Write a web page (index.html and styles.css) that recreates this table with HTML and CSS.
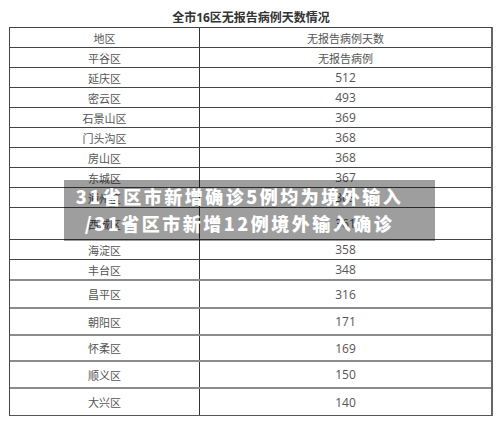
FILE: index.html
```html
<!DOCTYPE html>
<html lang="zh-CN">
<head>
<meta charset="utf-8">
<title>全市16区无报告病例天数情况</title>
<link rel="stylesheet" href="styles.css">
</head>
<body>
<div class="page">
  <div class="title">全市16区无报告病例天数情况</div>
  <div class="table">
    <div class="row head"><div class="c1">地区</div><div class="c2">无报告病例天数</div></div>
    <div class="row"><div class="c1">平谷区</div><div class="c2">无报告病例</div></div>
    <div class="row"><div class="c1">延庆区</div><div class="c2 num">512</div></div>
    <div class="row"><div class="c1">密云区</div><div class="c2 num">493</div></div>
    <div class="row"><div class="c1">石景山区</div><div class="c2 num">369</div></div>
    <div class="row"><div class="c1">门头沟区</div><div class="c2 num">368</div></div>
    <div class="row"><div class="c1">房山区</div><div class="c2 num">368</div></div>
    <div class="row"><div class="c1">东城区</div><div class="c2 num">367</div></div>
    <div class="row"><div class="c1">通州区</div><div class="c2 num">363</div></div>
    <div class="row tall"><div class="c1">西城区</div><div class="c2 num">361</div></div>
    <div class="row"><div class="c1">海淀区</div><div class="c2 num">358</div></div>
    <div class="row"><div class="c1">丰台区</div><div class="c2 num">348</div></div>
    <div class="row big h28"><div class="c1">昌平区</div><div class="c2 num">316</div></div>
    <div class="row big h27"><div class="c1">朝阳区</div><div class="c2 num">171</div></div>
    <div class="row big h26"><div class="c1">怀柔区</div><div class="c2 num">169</div></div>
    <div class="row big h27"><div class="c1">顺义区</div><div class="c2 num">150</div></div>
    <div class="row big h28"><div class="c1">大兴区</div><div class="c2 num">140</div></div>
  </div>
  <div class="overlay"><span class="line">31省区市新增确诊5例均为境外输入</span><span class="line">/31省区市新增12例境外输入确诊</span></div>
</div>
</body>
</html>
```

FILE: styles.css
```css
html, body {
  margin: 0;
  padding: 0;
  background: #fff;
}
.page {
  position: relative;
  width: 500px;
  height: 424px;
  font-family: "Open Sans", "Noto Sans CJK SC", sans-serif;
  color: #555;
}
.title {
  margin-left: 9px;
  width: 484px;
  height: 27px;
  box-sizing: border-box;
  padding-top: 11px;
  line-height: 14px;
  font-size: 12px;
  font-weight: 700;
  color: #333;
  text-align: center;
}
.table {
  margin-left: 9px;
  width: 484px;
  box-sizing: border-box;
  border-top: 1px solid #444;
  border-left: 1px solid #444;
  border-right: 2px solid #666;
  border-bottom: 1px solid #555;
}
.row {
  display: flex;
  height: 20px;
  box-sizing: border-box;
  border-top: 1px solid #444;
  font-size: 11px;
}
.row.head {
  height: 19px;
  border-top: none;
}
.row.tall { height: 32px; }
.row.big { border-top: 2px solid #8c8c8c; }
.row.h28 { height: 28px; }
.row.h27 { height: 27px; }
.row.h26 { height: 26px; }
.c1, .c2 {
  display: flex;
  align-items: center;
  justify-content: center;
}
.c1 {
  width: 189px;
  border-right: 1px solid #333;
}
.c2 {
  flex: 1;
}
.num {
  font-size: 12px;
}
.overlay {
  position: absolute;
  left: 64px;
  top: 180px;
  width: 371px;
  height: 61px;
  box-sizing: border-box;
  padding: 3px 20px 0 0;
  background: rgba(0, 0, 0, 0.38);
  color: #fff;
  font-family: "Noto Sans CJK SC", sans-serif;
  font-weight: 900;
  font-size: 18px;
  line-height: 27px;
  letter-spacing: 2.5px;
  text-align: center;
}
.line {
  display: block;
  white-space: nowrap;
}
```
